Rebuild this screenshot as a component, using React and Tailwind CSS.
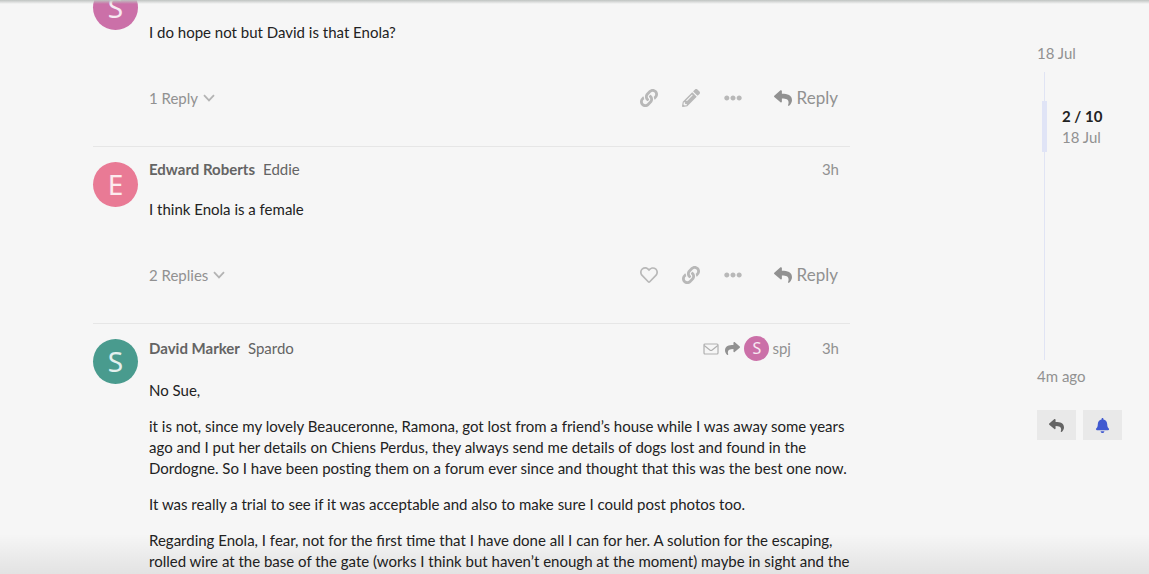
import {
  FaBell,
  FaEllipsisH,
  FaLink,
  FaPencilAlt,
  FaRegHeart,
  FaReply,
  FaShare,
} from "react-icons/fa";

const POSTS = [
  {
    id: 1,
    letter: "S",
    avatar: "bg-[#cb70a8]",
    body: ["I do hope not but David is that Enola?"],
    replies: "1 Reply",
    actions: ["link", "edit", "more"],
  },
  {
    id: 2,
    name: "Edward Roberts",
    username: "Eddie",
    letter: "E",
    avatar: "bg-[#e97a95]",
    time: "3h",
    body: ["I think Enola is a female"],
    replies: "2 Replies",
    actions: ["like", "link", "more"],
  },
  {
    id: 3,
    name: "David Marker",
    username: "Spardo",
    letter: "S",
    avatar: "bg-[#499b8e]",
    time: "3h",
    replyTo: { username: "spj", letter: "S" },
    body: [
      "No Sue,",
      "it is not, since my lovely Beauceronne, Ramona, got lost from a friend’s house while I was away some years ago and I put her details on Chiens Perdus, they always send me details of dogs lost and found in the Dordogne. So I have been posting them on a forum ever since and thought that this was the best one now.",
      "It was really a trial to see if it was acceptable and also to make sure I could post photos too.",
      "Regarding Enola, I fear, not for the first time that I have done all I can for her. A solution for the escaping, rolled wire at the base of the gate (works I think but haven’t enough at the moment) maybe in sight and the",
    ],
  },
];

const ACTIONS = {
  like: { label: "Like this post", Icon: FaRegHeart },
  link: { label: "Share a link to this post", Icon: FaLink },
  edit: { label: "Edit this post", Icon: FaPencilAlt },
  more: { label: "Show more", Icon: FaEllipsisH },
};

function ChevronIcon() {
  return (
    <svg viewBox="0 0 12 8" className="w-3 h-2" aria-hidden="true">
      <path d="M1 1.2 L6 6.4 L11 1.2" fill="none" stroke="#b4b4b4" strokeWidth="1.8" />
    </svg>
  );
}

function EnvelopeIcon() {
  return (
    <svg viewBox="0 0 16 12" className="w-4 h-3" aria-hidden="true">
      <rect x="1" y="1" width="14" height="10" rx="1" fill="none" stroke="#b0b0b0" strokeWidth="1.2" />
      <path d="M1.2 2.6 L6.8 6.9 Q8 7.7 9.2 6.9 L14.8 2.6" fill="none" stroke="#b0b0b0" strokeWidth="1.2" />
    </svg>
  );
}

function PostHeader({ post }) {
  return (
    <header className="flex items-center min-h-[21px] pr-[11px] text-[#919191]">
      {post.name && (
        <>
          <a href="#user" className="font-bold text-[#646464]">{post.name}</a>
          <a href="#user" className="ml-2 text-[#646464]">{post.username}</a>
        </>
      )}
      <div className="ml-auto flex items-center">
        {post.replyTo && (
          <>
            <EnvelopeIcon />
            <a href="#parent" className="flex items-center ml-1.5 mr-[31px]">
              <FaShare className="size-[15px]" aria-hidden="true" />
              <span className="ml-1 size-[25px] rounded-full bg-[#cb70a8] text-white/85 font-['Noto_Sans',sans-serif] text-[16px] leading-[25px] text-center">
                {post.replyTo.letter}
              </span>
              <span className="ml-[3px]">{post.replyTo.username}</span>
            </a>
          </>
        )}
        {post.time && <a href="#post">{post.time}</a>}
      </div>
    </header>
  );
}

function PostFooter({ post }) {
  return (
    <footer className="flex items-center h-9 mt-[37px] mb-[30px] text-[#919191]">
      <button type="button" className="flex items-center gap-[5px]">
        {post.replies}
        <ChevronIcon />
      </button>
      <div className="ml-auto flex items-center">
        {post.actions.map((key) => {
          const { label, Icon } = ACTIONS[key];
          return (
            <button
              key={key}
              type="button"
              aria-label={label}
              className="flex items-center justify-center w-[42px] h-9 text-[#b8b8b8]"
            >
              <Icon className="size-[18px]" />
            </button>
          );
        })}
        <button type="button" className="flex items-center gap-[5px] pl-5 pr-3 text-[17px] leading-5">
          <FaReply className="size-[18px]" aria-hidden="true" />
          Reply
        </button>
      </div>
    </footer>
  );
}

function Post({ post }) {
  return (
    <article className="flex border-t border-[#e6e6e6]">
      <div
        className={`mt-[15px] mr-[11px] size-[45px] shrink-0 rounded-full text-center font-['Noto_Sans',sans-serif] text-[28px] leading-[45px] text-white/85 ${post.avatar}`}
      >
        {post.letter}
      </div>
      <div className="flex-1 min-w-0 pt-3">
        <PostHeader post={post} />
        <div className="flex flex-col gap-[15px] mt-[19px] text-[#222222]">
          {post.body.map((text) => (
            <p key={text}>{text}</p>
          ))}
        </div>
        {post.actions && <PostFooter post={post} />}
      </div>
    </article>
  );
}

function Timeline() {
  return (
    <aside className="w-[85px] shrink-0 pt-[43px] text-[#919191]">
      <a href="#first">18 Jul</a>
      <div className="h-72 mt-2 ml-[7px] pt-[29px] border-l border-[#e0e4f4]">
        <div className="flex items-center -ml-[3px]">
          <div className="w-[5px] h-[51px] bg-[#e0e4f6]" />
          <div className="ml-[15px]">
            <div className="font-bold text-[#222222]">2 / 10</div>
            <div>18 Jul</div>
          </div>
        </div>
      </div>
      <a href="#last" className="block mt-1.5">4m ago</a>
      <div className="flex gap-[7px] mt-[23px]">
        <button
          type="button"
          aria-label="Reply"
          className="flex items-center justify-center w-[39px] h-[30px] bg-[#e9e9e9] text-[#646464]"
        >
          <FaReply className="size-[15px]" />
        </button>
        <button
          type="button"
          aria-label="Notifications"
          className="flex items-center justify-center w-[39px] h-[30px] bg-[#e9e9e9] text-[#4059d0]"
        >
          <FaBell className="size-[15px]" />
        </button>
      </div>
    </aside>
  );
}

export default function App() {
  return (
    <div className="relative h-screen overflow-hidden bg-[#f6f6f6] font-['Lato',sans-serif] text-[15px] leading-[21px]">
      <div className="flex justify-between gap-8 pl-[93px] pr-[27px]">
        {/* scrolled a little way into the topic */}
        <main className="flex-1 min-w-0 max-w-[757px] -mt-[31px]">
          {POSTS.map((post) => (
            <Post key={post.id} post={post} />
          ))}
        </main>
        <Timeline />
      </div>
      {/* edge of the site header and its shadow */}
      <div className="absolute inset-x-0 top-0 h-1 bg-linear-to-b from-[#bfc3c1] to-transparent pointer-events-none" />
      <div className="absolute inset-x-0 bottom-0 h-10 bg-linear-to-b from-transparent to-black/8 pointer-events-none" />
    </div>
  );
}
